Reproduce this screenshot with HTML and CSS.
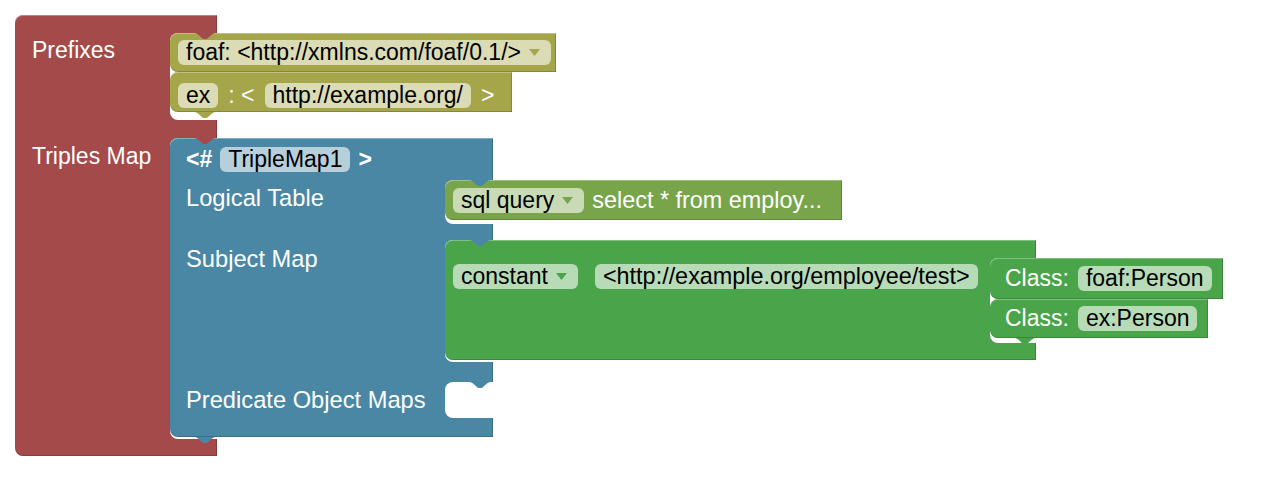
FILE: index.html
```html
<!DOCTYPE html>
<html lang="en">
<head>
  <meta charset="UTF-8" />
  <title>R2RML Blocks</title>
  <link rel="stylesheet" href="styles.css">
</head>
<body>
  <div class="ws">
    <!-- Triples map container -->
    <div class="block red">
      <div class="bar h18"></div>
      <div class="row">
        <div class="label lab-red pt3">Prefixes</div>
        <div class="slot pb8">
          <div class="block olive nt foaf">
            <div class="fields">
              <span class="pill">foaf: &lt;http://xmlns.com/foaf/0.1/&gt;<svg class="arrow" width="11" height="7" viewBox="0 0 11 7"><path d="M0 0h11L5.5 7z"/></svg></span>
            </div>
          </div>
          <div class="block olive tb ex">
            <div class="fields">
              <span class="pill">ex</span>
              <span>: &lt;</span>
              <span class="pill">http://example.org/</span>
              <span>&gt;</span>
            </div>
          </div>
        </div>
      </div>
      <div class="bar h18"></div>
      <div class="row">
        <div class="label lab-red pt4">Triples Map</div>
        <div class="slot pb2">

          <!-- Triple map -->
          <div class="block blue nt tb">
            <div class="fields head">
              <b>&lt;#</b>
              <span class="pill">TripleMap1</span>
              <b>&gt;</b>
            </div>
            <div class="row">
              <div class="label lab-blue pt4">Logical Table</div>
              <div class="slot pb4">
                <div class="block lime nt sql">
                  <div class="fields">
                    <span class="pill">sql query<svg class="arrow" width="11" height="7" viewBox="0 0 11 7"><path d="M0 0h11L5.5 7z"/></svg></span>
                    <span class="wide">select * from employ...</span>
                  </div>
                </div>
              </div>
            </div>
            <div class="bar h16"></div>
            <div class="row">
              <div class="label lab-blue pt5">Subject Map</div>
              <div class="slot pb2">
                <div class="block green nt subject">
                  <div class="bar h18"></div>
                  <div class="row">
                    <div class="fields top">
                      <span class="pill">constant<svg class="arrow" width="11" height="7" viewBox="0 0 11 7"><path d="M0 0h11L5.5 7z"/></svg></span>
                      <span class="pill wide">&lt;http://example.org/employee/test&gt;</span>
                    </div>
                    <div class="slot pb5">
                      <div class="block green cls c1">
                        <div class="fields">
                          <span>Class:</span>
                          <span class="pill">foaf:Person</span>
                        </div>
                      </div>
                      <div class="block green tb cls c2">
                        <div class="fields">
                          <span>Class:</span>
                          <span class="pill">ex:Person</span>
                        </div>
                      </div>
                    </div>
                  </div>
                  <div class="bar h17"></div>
                </div>
              </div>
            </div>
            <div class="bar h20"></div>
            <div class="row">
              <div class="label lab-blue mid">Predicate Object Maps</div>
              <div class="slot empty"></div>
            </div>
            <div class="bar h19"></div>
          </div>

        </div>
      </div>
      <div class="bar h17"></div>
    </div>
  </div>
</body>
</html>
```

FILE: styles.css
```css
* {
  margin: 0;
  padding: 0;
  box-sizing: border-box;
}

body {
  background: #fff;
  color: #fff;
  font-family: "Liberation Sans", Arial, sans-serif;
  font-size: 23px;
}

.ws {
  padding: 15px 0 0 15px;
}

/* blocks */
.block {
  position: relative;
  flex-shrink: 0;
  background: var(--c);
  border-radius: 8px 0 0 8px;
  box-shadow: inset 0 1px 0 rgba(255, 255, 255, 0.3),
              inset 0 -1px 0 rgba(0, 0, 0, 0.18),
              inset -1px 0 0 rgba(0, 0, 0, 0.18);
}

.red   { --c: #a54a4a; width: 202px; }
.olive { --c: #a5a54a; --pc: #a54a4a; }
.blue  { --c: #4a87a5; --pc: #a54a4a; width: 323px; }
.lime  { --c: #78a54a; --pc: #4a87a5; }
.green { --c: #4aa54a; --pc: #4a87a5; }

/* notch at top (parent tab) and tab at bottom */
.nt::before,
.tb::after,
.slot.empty::before {
  content: '';
  position: absolute;
  left: 24px;
  width: 22px;
  height: 6px;
  clip-path: path('M0 0 C5 0 7 6 10 6 L12 6 C15 6 17 0 22 0 Z');
}

.nt::before {
  top: 0;
  background: var(--pc);
}

.tb::after {
  bottom: -6px;
  background: var(--c);
  z-index: 2;
}

.slot.empty::before {
  top: 0;
  background: var(--c);
}

.row {
  display: flex;
}

.bar.h16 { height: 16px; }
.bar.h17 { height: 17px; }
.bar.h18 { height: 18px; }
.bar.h19 { height: 19px; }
.bar.h20 { height: 20px; }

.label {
  flex-shrink: 0;
  line-height: 28px;
  white-space: nowrap;
}

.lab-red {
  width: 155px;
  padding-left: 17px;
}

.lab-blue {
  width: 275px;
  padding-left: 16px;
  font-size: 23.7px;
}

.pt3 { padding-top: 3px; }
.pt4 { padding-top: 4px; }
.pt5 { padding-top: 5px; }

.label.mid {
  align-self: center;
}

/* statement input */
.slot {
  position: relative;
  flex: 1;
  display: flex;
  flex-direction: column;
  align-items: flex-start;
  background: #fff;
  border-radius: 8px 0 0 8px;
}

.pb2 { padding-bottom: 2px; }
.pb4 { padding-bottom: 4px; }
.pb5 { padding-bottom: 5px; }
.pb8 { padding-bottom: 8px; }

.slot.empty {
  height: 36px;
  --c: #4a87a5;
}

/* fields */
.fields {
  display: flex;
  align-items: center;
  gap: 10px;
  padding-left: 8px;
  white-space: nowrap;
}

.pill {
  display: inline-flex;
  align-items: center;
  height: 25px;
  line-height: 25px;
  padding: 0 8px;
  border-radius: 6px;
  background: rgba(255, 255, 255, 0.6);
  color: #000;
}

.wide {
  font-size: 23.4px;
}

.arrow {
  margin: 0 3px 0 8px;
  fill: var(--c);
}

.foaf { width: 386px; }
.foaf .fields { height: 39px; }

.ex { width: 342px; }
.ex .fields { height: 40px; padding-top: 6px; }

.head {
  height: 42px;
  padding-left: 16px;
  gap: 8px;
}

.sql { width: 397px; }
.sql .fields { height: 40px; gap: 8px; }

.subject { width: 591px; }

.fields.top {
  flex-shrink: 0;
  width: 545px;
  align-items: flex-start;
  padding-top: 6px;
  gap: 17px;
}

.cls .fields {
  padding-left: 15px;
  gap: 9px;
}

.c1 { width: 233px; }
.c1 .fields { height: 41px; }

.c2 { width: 218px; }
.c2 .fields { height: 39px; }
```
